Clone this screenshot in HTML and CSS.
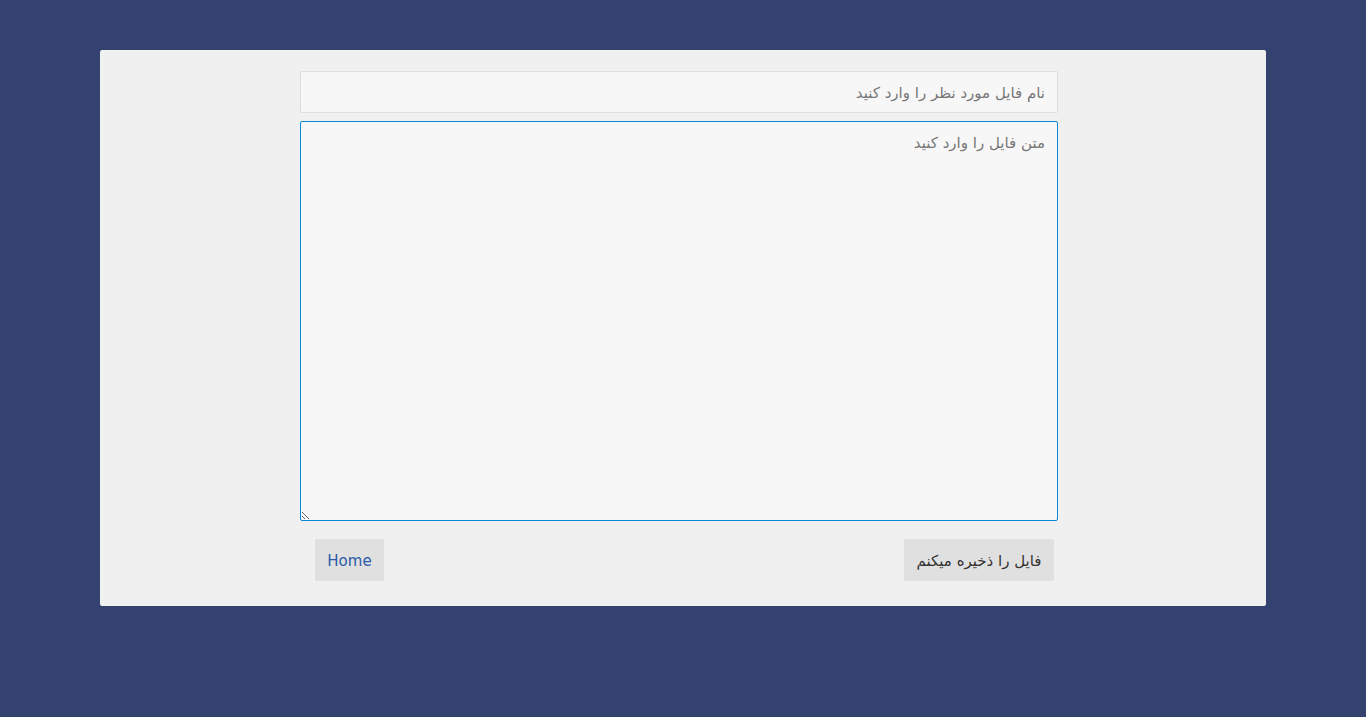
FILE: index.html
```html
<!DOCTYPE html>
<html lang="fa">
<head>
<meta charset="utf-8">
<title>ویرایش فایل</title>
<link rel="stylesheet" href="styles.css">
</head>
<body>
<div class="card">
  <form class="form">
    <input class="field name" type="text" placeholder="نام فایل مورد نظر را وارد کنید">
    <textarea class="field text" placeholder="متن فایل را وارد کنید" autofocus></textarea>
    <div class="actions">
      <button type="button" class="btn save">فایل را ذخیره میکنم</button>
      <a class="btn home" href="#">Home</a>
    </div>
  </form>
</div>
</body>
</html>
```
FILE: styles.css
```css
html, body {
  margin: 0;
  padding: 0;
  background: #344270;
  font-family: "Segoe UI", "DejaVu Sans", "Noto Sans", sans-serif;
}
body {
  padding: 50px 100px 0 100px;
}
.card {
  background: #f0f0f0;
  border-radius: 2px;
  height: 556px;
  box-sizing: border-box;
  padding: 21px 208px 0 200px;
}
.form {
  display: flex;
  flex-direction: column;
  gap: 8px;
  direction: rtl;
}
.field {
  box-sizing: border-box;
  width: 758px;
  background: #f7f7f7;
  border: 1px solid #dddddd;
  border-radius: 2px;
  font-family: inherit;
  font-size: 15px;
  color: #555;
  direction: rtl;
  text-align: right;
  padding: 0 12px;
  outline: none;
}
.field::placeholder { color: #777; }
.name { height: 42px; padding-top: 2px; }
.text {
  height: 400px;
  padding-top: 12px;
  border-color: #0a88d6;
  resize: both;
}
.actions {
  display: flex;
  justify-content: space-between;
  padding: 10px 4px 0 15px;
}
.btn {
  height: 42px;
  box-sizing: border-box;
  background: #e0e0e0;
  border: none;
  border-radius: 2px;
  font-family: inherit;
  font-size: 15px;
  padding: 0 4px;
  display: flex;
  align-items: center;
  justify-content: center;
  white-space: nowrap;
  text-decoration: none;
}
.save { color: #333; width: 150px; padding-top: 2px; }
.home { color: #2a5ba8; width: 69px; direction: ltr; padding-top: 2px; }
```
